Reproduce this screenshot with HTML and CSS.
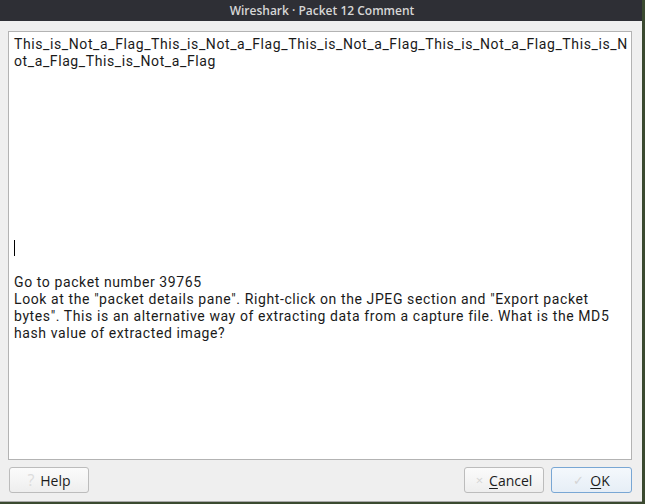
FILE: index.html
```html
<!DOCTYPE html>
<html>
<head>
<meta charset="utf-8">
<link rel="stylesheet" href="styles.css">
</head>
<body>
<div class="window">
  <div class="titlebar">Wireshark · Packet 12 Comment</div>
  <div class="content">
    <div class="editor">
      <div class="line">This_is_Not_a_Flag_This_is_Not_a_Flag_This_is_Not_a_Flag_This_is_Not_a_Flag_This_is_N</div>
      <div class="line">ot_a_Flag_This_is_Not_a_Flag</div>
      <div class="blank"></div>
      <div class="line"><span class="caret"></span></div>
      <div class="line">&nbsp;</div>
      <div class="line">Go to packet number 39765</div>
      <div class="line">Look at the "packet details pane". Right-click on the JPEG section and "Export packet</div>
      <div class="line">bytes". This is an alternative way of extracting data from a capture file. What is the MD5</div>
      <div class="line">hash value of extracted image?</div>
    </div>
    <div class="buttons">
      <button class="btn help"><span class="ico q">?</span>Help</button>
      <div class="spacer"></div>
      <button class="btn cancel"><span class="ico x">×</span><u>C</u>ancel</button>
      <button class="btn ok"><span class="ico v">✓</span><u>O</u>K</button>
    </div>
  </div>
</div>
</body>
</html>
```
FILE: styles.css
```css
html, body {
  margin: 0;
  padding: 0;
}
body {
  width: 645px;
  height: 504px;
  background: #3b4a30;
  overflow: hidden;
  font-family: "Open Sans", "Noto Sans", sans-serif;
}
.window {
  width: 642px;
  height: 501px;
  background: #efefef;
  display: flex;
  flex-direction: column;
  border-bottom: 1px solid #a9a9a9;
}
.titlebar {
  height: 21px;
  background: #2e2f35;
  color: #d6d6d6;
  font-size: 12px;
  font-weight: 600;
  line-height: 21px;
  text-align: center;
  padding-left: 2px;
}
.content {
  flex: 1;
  display: flex;
  flex-direction: column;
  padding: 10px 10px 8px 8px;
}
.editor {
  height: 421px;
  background: #ffffff;
  border: 1px solid #b3b3b3;
  padding: 4px 5px 2px;
  color: #1a1a1a;
  font-family: Roboto, "Open Sans", sans-serif;
  font-size: 14px;
  line-height: 17px;
  letter-spacing: 0.6px;
}
.line {
  height: 17px;
  white-space: nowrap;
}
.blank {
  height: 170px;
}
.caret {
  display: inline-block;
  width: 1px;
  height: 16px;
  background: #000;
  vertical-align: -3px;
}
.buttons {
  display: flex;
  margin-top: 7px;
  gap: 7px;
}
.spacer {
  flex: 1;
}
.btn {
  height: 26px;
  border: 1px solid #bcbcbc;
  border-radius: 3px;
  background: linear-gradient(#fbfbfb, #eeeeee);
  font-family: "Open Sans", "Noto Sans", sans-serif;
  font-size: 14px;
  color: #1c1c1c;
  display: flex;
  align-items: center;
  justify-content: center;
  padding: 0;
}
.help {
  width: 80px;
  margin-left: 1px;
}
.cancel {
  width: 80px;
  margin-left: 1px;
}
.ok {
  width: 81px;
  border-color: #79a7d4;
  background: linear-gradient(#f4f8fc, #e6eef6);
}
.ico {
  color: #d4d4d4;
  margin-right: 6px;
  font-size: 13px;
}
.q {
  font-size: 16px;
  color: #dcdcdc;
}
u {
  text-decoration-thickness: 1px;
  text-underline-offset: 2px;
}
```
